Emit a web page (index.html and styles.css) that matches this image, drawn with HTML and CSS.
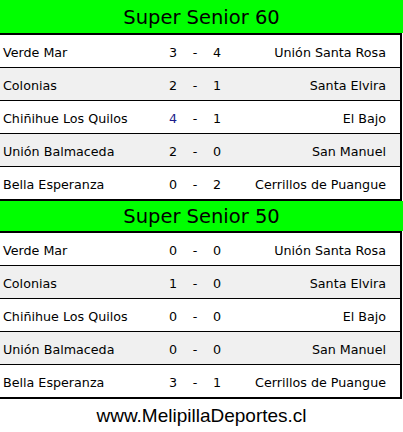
FILE: index.html
```html
<!DOCTYPE html>
<html>
<head>
<meta charset="utf-8">
<link rel="stylesheet" href="styles.css">
</head>
<body>
<div class="page">
  <div class="title title-first">Super Senior 60</div>
  <div class="rows">
    <div class="row"><span class="home">Verde Mar</span><span class="hs">3</span><span class="dash">-</span><span class="as">4</span><span class="away">Unión Santa Rosa</span></div>
    <div class="row alt"><span class="home">Colonias</span><span class="hs">2</span><span class="dash">-</span><span class="as">1</span><span class="away">Santa Elvira</span></div>
    <div class="row"><span class="home">Chiñihue Los Quilos</span><span class="hs blue">4</span><span class="dash">-</span><span class="as">1</span><span class="away">El Bajo</span></div>
    <div class="row alt"><span class="home">Unión Balmaceda</span><span class="hs">2</span><span class="dash">-</span><span class="as">0</span><span class="away">San Manuel</span></div>
    <div class="row"><span class="home">Bella Esperanza</span><span class="hs">0</span><span class="dash">-</span><span class="as">2</span><span class="away">Cerrillos de Puangue</span></div>
  </div>
  <div class="title">Super Senior 50</div>
  <div class="rows">
    <div class="row"><span class="home">Verde Mar</span><span class="hs">0</span><span class="dash">-</span><span class="as">0</span><span class="away">Unión Santa Rosa</span></div>
    <div class="row alt"><span class="home">Colonias</span><span class="hs">1</span><span class="dash">-</span><span class="as">0</span><span class="away">Santa Elvira</span></div>
    <div class="row"><span class="home">Chiñihue Los Quilos</span><span class="hs">0</span><span class="dash">-</span><span class="as">0</span><span class="away">El Bajo</span></div>
    <div class="row alt"><span class="home">Unión Balmaceda</span><span class="hs">0</span><span class="dash">-</span><span class="as">0</span><span class="away">San Manuel</span></div>
    <div class="row"><span class="home">Bella Esperanza</span><span class="hs">3</span><span class="dash">-</span><span class="as">1</span><span class="away">Cerrillos de Puangue</span></div>
  </div>
  <div class="footer">www.MelipillaDeportes.cl</div>
</div>
</body>
</html>
```
FILE: styles.css
```css
html, body {
  margin: 0;
  padding: 0;
  background: #fff;
}
.page {
  width: 403px;
  font-family: "DejaVu Sans", Verdana, sans-serif;
  color: #000;
}
.title {
  background: #00ff00;
  height: 30px;
  display: flex;
  align-items: center;
  justify-content: center;
  font-size: 19.5px;
  padding-top: 1px;
  box-sizing: border-box;
}
.title-first {
  height: 33px;
  padding-top: 2px;
}
.rows {
  width: 400px;
  border-top: 2px solid #000;
  border-right: 2px solid #000;
  border-bottom: 2px solid #000;
}
.row {
  display: grid;
  grid-template-columns: 150px 30px 30px 30px 1fr;
  align-items: center;
  height: 32px;
  padding-top: 2px;
  box-sizing: border-box;
  border-bottom: 1px solid #000;
  font-size: 12.7px;
  background: #fff;
}
.row:last-child {
  border-bottom: none;
  height: 32px;
}
.row:not(:last-child) {
  height: 33px;
}
.row.alt {
  background: #f0f0f0;
}
.home {
  padding-left: 3px;
  white-space: nowrap;
}
.hs {
  text-align: right;
  padding-right: 3px;
}
.dash {
  text-align: center;
}
.as {
  text-align: left;
  padding-left: 3px;
}
.away {
  text-align: right;
  padding-right: 14px;
  white-space: nowrap;
}
.blue {
  color: #1c1c8a;
}
.footer {
  font-family: "Liberation Sans", Arial, sans-serif;
  font-size: 19px;
  text-align: center;
  padding-top: 6px;
}
```
